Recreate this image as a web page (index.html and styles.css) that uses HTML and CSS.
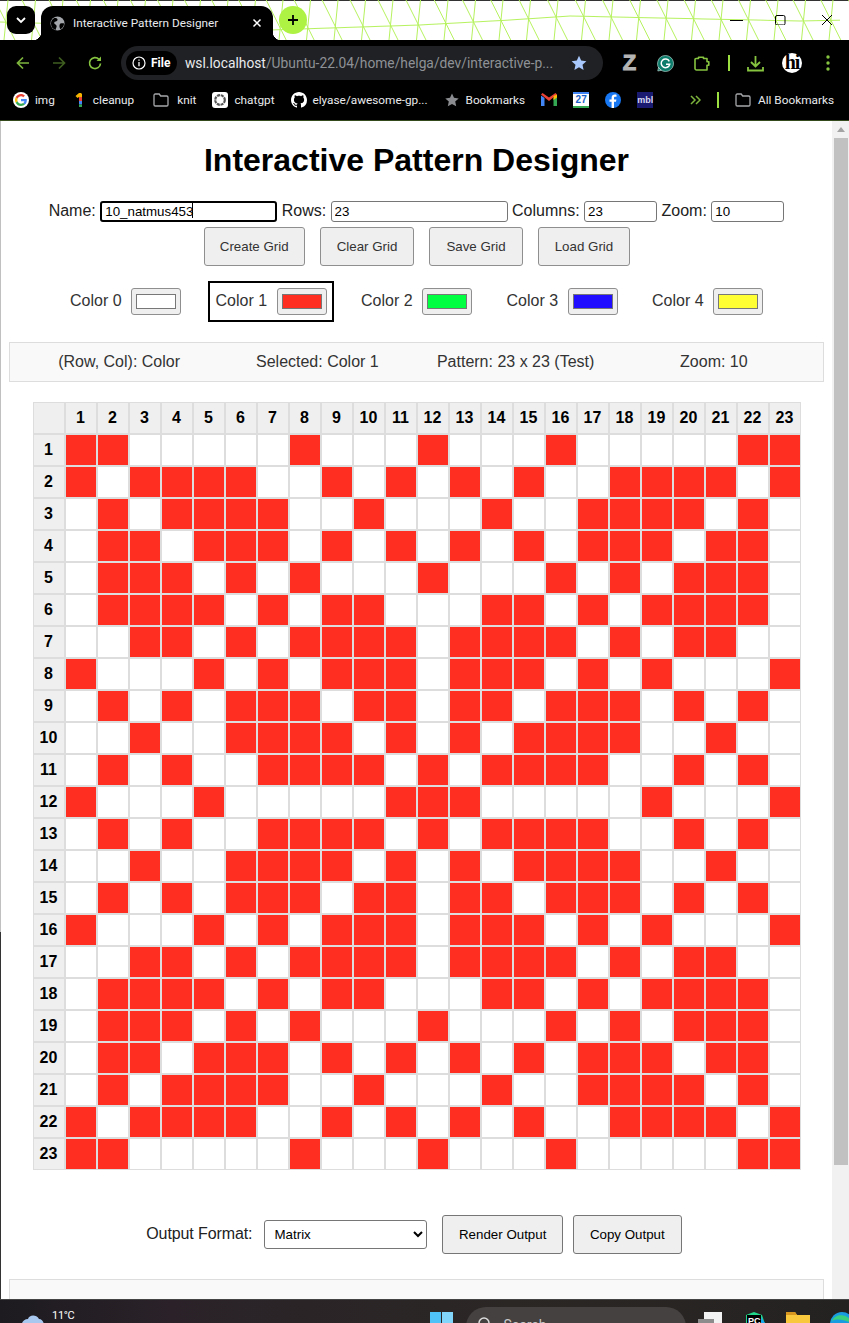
FILE: index.html
```html
<!DOCTYPE html>
<html lang="en">
<head>
  <meta charset="UTF-8">
  <title>Interactive Pattern Designer</title>
  <link rel="stylesheet" href="styles.css">
</head>
<body>

  <!-- browser tab strip -->
  <div class="tabstrip">
    <svg class="mesh" id="mesh" width="849" height="40"></svg>
    <button class="tab-search">
      <svg width="12" height="8" viewBox="0 0 12 8"><path d="M2 2l4 4 4-4" fill="none" stroke="#fff" stroke-width="1.8"/></svg>
    </button>
    <div class="tab">
      <svg width="15" height="15" viewBox="0 0 16 16"><circle cx="8" cy="8" r="7.5" fill="#a3a6ab"/><path d="M5 1.500c2 .5 3.500 1.500 3 3s-3 1-3.500 2.500 2 2 2.500 3.500-1 3-1 4.500c-3-1-5-3.500-5-7 0-3 1.500-5 4.500-6.500zM11 8c1.500-.5 3-.5 4 0 0 2.500-1.500 5-4 6-1-1.500-1.500-4.500 0-6z" fill="#000"/></svg>
      <span class="tab-title">Interactive Pattern Designer</span>
      <svg class="tab-close" width="10" height="10" viewBox="0 0 10 10"><path d="M1.500 1.500l7 7m0-7l-7 7" stroke="#fff" stroke-width="1.500"/></svg>
    </div>
    <button class="new-tab">
      <svg width="12" height="12" viewBox="0 0 12 12"><path d="M6 1v10M1 6h10" stroke="#000" stroke-width="1.800"/></svg>
    </button>
    <div class="window-btns">
      <svg width="13" height="12" viewBox="0 0 13 12"><path d="M0 7.500h13" stroke="#000" stroke-width="1"/></svg>
      <svg width="12" height="12" viewBox="0 0 12 12"><rect x="1.500" y="2.500" width="9.500" height="9.500" rx="1.500" fill="none" stroke="#000"/></svg>
      <svg class="win-close" width="12" height="12" viewBox="0 0 12 12"><path d="M1 2l10 10M11 2L1 12" stroke="#000"/></svg>
    </div>
  </div>

  <!-- address bar -->
  <div class="toolbar">
    <div class="nav-btns">
      <svg width="16" height="16" viewBox="0 0 16 16"><path d="M14 8H3M8 2.500L2.500 8 8 13.500" fill="none" stroke="#7db53c" stroke-width="1.700"/></svg>
      <svg width="16" height="16" viewBox="0 0 16 16"><path d="M2 8h11M8 2.500L13.500 8 8 13.500" fill="none" stroke="#3f5f20" stroke-width="1.700"/></svg>
      <svg width="16" height="16" viewBox="0 0 16 16"><path d="M13.500 8.500A5.500 5.500 0 1 1 12 4.300" fill="none" stroke="#86c440" stroke-width="1.700"/><path d="M14 1.500V6H9.500z" fill="#86c440"/></svg>
    </div>
    <div class="omnibox">
      <div class="file-chip">
        <svg width="14" height="14" viewBox="0 0 14 14"><circle cx="7" cy="7" r="6" fill="none" stroke="#fff" stroke-width="1.200"/><path d="M7 6v4.200M7 3.500v1.300" stroke="#fff" stroke-width="1.300"/></svg>
        <span>File</span>
      </div>
      <div class="url"><span class="url-host">wsl.localhost</span>/Ubuntu-22.04/home/helga/dev/interactive-p...</div>
      <svg class="url-star" width="16" height="16" viewBox="0 0 16 16"><path d="M8 .8l2.200 4.800 5.200.6-3.900 3.500 1.100 5.200L8 12.300l-4.600 2.600 1.100-5.200L.6 6.200l5.200-.6z" fill="#a8c7fa"/></svg>
    </div>
    <div class="ext-icons">
      <span class="ext-z">Z</span>
      <svg width="17" height="17" viewBox="0 0 17 17"><path d="M8.500.5a8 8 0 1 1-7 11.800L.8 16l3.600-.7A8 8 0 0 1 8.500.5z" fill="#0e7c6b" stroke="#cfe8e2" stroke-width=".6"/><path d="M12.300 6.300a4.300 4.300 0 1 0 .4 3H9" fill="none" stroke="#fff" stroke-width="1.500"/></svg>
      <svg width="17" height="17" viewBox="0 0 17 17"><path d="M3 3.500h2.500V2.200h5v1.300H14v3.300h1.800v3.400H14V15H3.500C2.700 15 2 14.300 2 13.500V4.500C2 4 2.500 3.500 3 3.500z" fill="none" stroke="#86c440" stroke-width="1.600" stroke-linejoin="round"/></svg>
      <span class="divider"></span>
      <svg class="ext-download" width="17" height="17" viewBox="0 0 17 17"><path d="M8.500 1v10M4 7l4.500 4.500L13 7" fill="none" stroke="#86c440" stroke-width="1.800"/><path d="M1 12v3.500h15V12" fill="none" stroke="#86c440" stroke-width="1.800"/></svg>
      <span class="avatar">hi</span>
      <svg class="ext-menu" width="4" height="16" viewBox="0 0 4 16"><circle cx="2" cy="2" r="1.700" fill="#86c440"/><circle cx="2" cy="8" r="1.700" fill="#86c440"/><circle cx="2" cy="14" r="1.700" fill="#86c440"/></svg>
    </div>
  </div>

  <!-- bookmarks bar -->
  <div class="bookmarks">
    <a class="bm">
      <svg width="16" height="16" viewBox="0 0 48 48"><circle cx="24" cy="24" r="24" fill="#fff"/><path fill="#ea4335" d="M24 13c3 0 5.200 1.100 6.800 2.600l5-4.900C32.700 7.800 28.700 6 24 6 17 6 11 10 8 15.900l5.800 4.500C15.300 16 19.300 13 24 13z"/><path fill="#4285f4" d="M41.500 24.400c0-1.400-.1-2.500-.4-3.600H24v6.700h10c-.2 1.700-1.300 4.200-3.800 5.900l5.700 4.400c3.500-3.200 5.600-7.900 5.600-13.400z"/><path fill="#fbbc05" d="M13.800 27.600c-.5-1.300-.7-2.300-.7-3.600s.3-2.500.7-3.600L8 15.900C6.700 18.400 6 21.100 6 24s.7 5.600 2 8.100z"/><path fill="#34a853" d="M24 42c4.900 0 9-1.600 11.900-4.400l-5.700-4.400c-1.500 1.100-3.500 1.800-6.200 1.800-4.700 0-8.700-3-10.200-7.400L8 32.100C11 38 17 42 24 42z"/></svg>
      img
    </a>
    <a class="bm">
      <svg width="16" height="16" viewBox="0 0 16 16"><path d="M10 1H8L4.500 4l2 2L8 5v4h3V2z" fill="#f4b400"/><path d="M8 5h3v4H8z" fill="#ea4335"/><path d="M8 9h3v3.500H8z" fill="#4285f4"/><path d="M8 12.500h3V15H8z" fill="#34a853"/></svg>
      cleanup
    </a>
    <a class="bm">
      <svg class="folder" width="16" height="14" viewBox="0 0 16 14"><path d="M1 2.500C1 1.700 1.500 1 2.300 1h3.900l1.500 2h6c.8 0 1.300.6 1.300 1.300v7.400c0 .7-.5 1.300-1.300 1.300H2.300C1.500 13 1 12.400 1 11.700z" fill="none" stroke="#a6a8ab" stroke-width="1.300"/></svg>
      knit
    </a>
    <a class="bm">
      <svg width="16" height="16" viewBox="0 0 16 16"><rect width="16" height="16" rx="3" fill="#fff"/><circle cx="8" cy="8" r="4.800" fill="none" stroke="#555" stroke-width="2.200" stroke-dasharray="3 .8"/></svg>
      chatgpt
    </a>
    <a class="bm">
      <svg width="16" height="16" viewBox="0 0 16 16"><path fill="#fff" d="M8 0C3.580 0 0 3.580 0 8c0 3.540 2.290 6.530 5.470 7.590.4.070.55-.17.55-.38 0-.19-.01-.82-.01-1.490-2.010.37-2.530-.49-2.690-.94-.09-.23-.48-.94-.82-1.130-.28-.15-.68-.52-.01-.53.63-.01 1.080.58 1.230.82.72 1.210 1.870.87 2.330.66.07-.52.28-.87.51-1.070-1.780-.2-3.640-.89-3.640-3.950 0-.87.31-1.590.82-2.150-.08-.2-.36-1.020.08-2.120 0 0 .67-.21 2.200.82.64-.18 1.320-.27 2-.27.68 0 1.360.09 2 .27 1.530-1.040 2.200-.82 2.200-.82.44 1.100.16 1.920.08 2.120.51.56.82 1.270.82 2.150 0 3.070-1.870 3.750-3.650 3.950.29.25.54.73.54 1.480 0 1.070-.01 1.930-.01 2.200 0 .21.15.46.55.38A8.013 8.013 0 0016 8c0-4.420-3.580-8-8-8z"/></svg>
      elyase/awesome-gp...
    </a>
    <a class="bm">
      <svg width="16" height="16" viewBox="0 0 16 16"><path d="M8 1.500l2 4.300 4.700.6-3.500 3.200 1 4.700L8 12l-4.200 2.300 1-4.700L1.300 6.400 6 5.800z" fill="#8a8c8f"/></svg>
      Bookmarks
    </a>
    <a class="bm">
      <svg width="16" height="13" viewBox="0 0 16 13"><path d="M0 2.500V13h3.500V5z" fill="#4285f4"/><path d="M16 2.500V13h-3.500V5z" fill="#34a853"/><path d="M0 1.500L8 8l8-6.500-1.500-1.500L8 4.500 1.500 0z" fill="#ea4335"/><path d="M16 1.500v3l-3.500 2.500V3z" fill="#fbbc05"/></svg>
    </a>
    <a class="bm">
      <span class="cal"><span class="cal-day">27</span></span>
    </a>
    <a class="bm">
      <svg width="16" height="16" viewBox="0 0 16 16"><circle cx="8" cy="8" r="8" fill="#1877f2"/><path d="M9 16V9.800h2l.4-2.400H9V6c0-.7.3-1.200 1.300-1.200h1.200V2.700C11 2.600 10.400 2.500 9.800 2.500 8 2.500 6.600 3.600 6.600 5.700v1.700H4.500v2.400h2.100V16z" fill="#fff"/></svg>
    </a>
    <a class="bm">
      <span class="mbl">mbl</span>
    </a>
    <div class="bm-right">
      <svg width="11" height="10" viewBox="0 0 11 10"><path d="M1 1l4 4-4 4M6 1l4 4-4 4" fill="none" stroke="#7db53c" stroke-width="1.500"/></svg>
      <span class="divider"></span>
      <a class="bm">
        <svg class="folder" width="16" height="14" viewBox="0 0 16 14"><path d="M1 2.500C1 1.700 1.500 1 2.300 1h3.900l1.500 2h6c.8 0 1.300.6 1.300 1.300v7.400c0 .7-.5 1.300-1.300 1.300H2.300C1.500 13 1 12.400 1 11.700z" fill="none" stroke="#a6a8ab" stroke-width="1.300"/></svg>
        All Bookmarks
      </a>
    </div>
  </div>

  <!-- the page itself -->
  <div class="viewport">
    <div class="window-edge"></div>
    <div class="page">
      <h1>Interactive Pattern Designer</h1>

      <div class="controls">
        <label>Name: <span class="name-wrap"><input type="text" class="name-input" value="10_natmus453"><span class="caret"></span></span></label>
        <label>Rows: <input type="text" class="rows-input" value="23"></label>
        <label>Columns: <input type="text" class="small-input" value="23"></label>
        <label>Zoom: <input type="text" class="small-input" value="10"></label>
      </div>

      <div class="actions">
        <button class="action-btn">Create Grid</button>
        <button class="action-btn">Clear Grid</button>
        <button class="action-btn">Save Grid</button>
        <button class="action-btn">Load Grid</button>
      </div>

      <div class="palette">
        <div class="color-item"><span>Color 0</span><input type="color" class="color-swatch" value="#ffffff"></div>
        <div class="color-item selected"><span>Color 1</span><input type="color" class="color-swatch" value="#ff2e20"></div>
        <div class="color-item"><span>Color 2</span><input type="color" class="color-swatch" value="#00ff41"></div>
        <div class="color-item"><span>Color 3</span><input type="color" class="color-swatch" value="#200cff"></div>
        <div class="color-item"><span>Color 4</span><input type="color" class="color-swatch" value="#ffff33"></div>
      </div>

      <div class="info-bar">
        <span>(Row, Col): Color</span>
        <span>Selected: Color 1</span>
        <span>Pattern: 23 x 23 (Test)</span>
        <span>Zoom: 10</span>
      </div>

      <table class="grid" id="grid"></table>

      <div class="output-controls">
        <label for="format" class="format-label">Output Format:</label>
        <select id="format" class="format-select">
          <option>Matrix</option>
        </select>
        <button class="output-btn">Render Output</button>
        <button class="output-btn">Copy Output</button>
      </div>

      <div class="output-box"></div>
    </div>
    <div class="scrollbar">
      <span class="scroll-up"></span>
      <span class="scroll-thumb"></span>
    </div>
  </div>

  <!-- windows taskbar, cut off by the bottom of the picture -->
  <div class="taskbar">
    <div class="weather">
      <svg width="26" height="20" viewBox="0 0 26 20"><path d="M4 20c-3-4 0-9 5-9 1-4 8-5 11 0 4 0 6 5 4 9z" fill="#a9c8f0"/></svg>
      <span>11°C</span>
    </div>
    <div class="task-center">
      <svg class="win-logo" width="23" height="23" viewBox="0 0 23 23"><rect width="11" height="11" fill="#4fc3f7"/><rect x="12" width="11" height="11" fill="#81d4fa"/><rect y="12" width="11" height="11" fill="#29a8e8"/><rect x="12" y="12" width="11" height="11" fill="#4fc3f7"/></svg>
      <div class="search-pill">
        <svg width="14" height="14" viewBox="0 0 14 14"><circle cx="6" cy="6" r="5" fill="none" stroke="#ddd" stroke-width="1.500"/></svg>
        <span>Search</span>
      </div>
      <div class="task-icons">
        <svg width="24" height="20" viewBox="0 0 24 20"><rect x="6" width="18" height="20" fill="#f2f2f2"/><rect y="7" width="16" height="13" fill="#8c8c8c"/></svg>
        <svg width="22" height="20" viewBox="0 0 22 20"><path d="M3 3l8-3 8 3 3 9-3 8H3z" fill="#21d789"/><path d="M18 5l4 6-4 6z" fill="#19a8f0"/><rect x="4" y="3" width="14" height="14" fill="#000"/><text x="5" y="12" font-size="9" font-weight="700" font-family="Liberation Sans, sans-serif" fill="#fff">PC</text></svg>
        <svg width="24" height="20" viewBox="0 0 24 20"><path d="M0 0h9l2 3h13v17H0z" fill="#f9c83d"/><path d="M0 0h9l2 3H0z" fill="#d6961f"/></svg>
        <svg class="edge" width="24" height="20" viewBox="0 0 24 20"><circle cx="12" cy="12" r="12" fill="#1a9de0"/><path d="M2 9c3-8 18-8 20 3-5-4-15-6-20-3z" fill="#39d07f"/></svg>
      </div>
    </div>
  </div>

  <script src="script.js"></script>
</body>
</html>
```

FILE: styles.css
```css
* {
  box-sizing: border-box;
}
html, body {
  margin: 0;
  height: 100%;
  overflow: hidden;
}
body {
  display: flex;
  flex-direction: column;
  font-family: "Liberation Sans", Arial, sans-serif;
  background: #000;
}
svg {
  display: block;
  flex: none;
}

/* tab strip */
.tabstrip {
  position: relative;
  display: flex;
  align-items: flex-start;
  height: 40px;
  background: #fff;
  border-top: 1px solid #333;
  flex: none;
}
.mesh {
  position: absolute;
  left: 0;
  top: -1px;
}
.tab-search {
  position: relative;
  display: flex;
  align-items: center;
  justify-content: center;
  width: 28px;
  height: 28px;
  margin: 5px 0 0 7px;
  padding: 0;
  background: #000;
  border: none;
  border-radius: 9px;
}
.tab {
  position: relative;
  display: flex;
  align-items: center;
  gap: 8px;
  width: 232px;
  height: 34px;
  margin: 5px 0 0 6px;
  padding: 0 11px 0 9px;
  background: #000;
  border-radius: 12px 12px 0 0;
}
.tab::before,
.tab::after {
  content: "";
  position: absolute;
  bottom: 0;
  width: 8px;
  height: 8px;
}
.tab::before {
  left: -8px;
  background: radial-gradient(circle at 0 0, transparent 8px, #000 8.500px);
}
.tab::after {
  right: -8px;
  background: radial-gradient(circle at 100% 0, transparent 8px, #000 8.500px);
}
.tab-title {
  flex: 1;
  color: #e8eaed;
  font: 11.800px Roboto, sans-serif;
  white-space: nowrap;
}
.new-tab {
  position: relative;
  display: flex;
  align-items: center;
  justify-content: center;
  width: 28px;
  height: 28px;
  margin: 5px 0 0 6px;
  padding: 0;
  background: #aef243;
  border: none;
  border-radius: 50%;
}
.window-btns {
  position: relative;
  display: flex;
  gap: 31px;
  margin: 12px 16px 0 auto;
}
.win-close {
  margin-left: 4px;
}

/* toolbar */
.toolbar {
  display: flex;
  align-items: center;
  height: 41px;
  padding-top: 5px;
  background: #000;
  flex: none;
}
.nav-btns {
  display: flex;
  gap: 20px;
  padding-left: 15px;
}
.omnibox {
  display: flex;
  align-items: center;
  width: 482px;
  height: 34px;
  margin-left: 18px;
  padding: 0 16px 0 5px;
  background: #202124;
  border-radius: 17px;
}
.file-chip {
  display: flex;
  align-items: center;
  gap: 5px;
  width: 51px;
  height: 24px;
  padding-left: 6px;
  background: #000;
  border-radius: 12px;
  color: #fff;
  font: 700 12px Roboto, sans-serif;
}
.url {
  flex: 1;
  margin-left: 8px;
  color: #8e9196;
  font: 13.800px Roboto, sans-serif;
  white-space: nowrap;
}
.url-host {
  color: #e8eaed;
}
.ext-icons {
  display: flex;
  align-items: center;
  gap: 19px;
  padding-left: 18px;
}
.ext-z {
  width: 17px;
  color: #b4b4b4;
  font: 700 22px/22px "Liberation Sans", sans-serif;
  text-align: center;
  -webkit-text-stroke: 1px #b4b4b4;
}
.divider {
  width: 2px;
  height: 16px;
  margin: 0 -1px;
  background: #9be040;
}
.ext-download {
  margin-left: -1px;
}
.avatar {
  width: 20px;
  height: 20px;
  margin-left: -1px;
  background: #fff;
  border-radius: 50%;
  color: #000;
  font: 700 20px/18px "Liberation Serif", serif;
  letter-spacing: -1px;
  text-align: center;
}
.ext-menu {
  margin-left: 5px;
}

/* bookmarks */
.bookmarks {
  display: flex;
  align-items: center;
  gap: 16px;
  height: 40px;
  padding: 0 15px 2px 13px;
  background: #000;
  border-bottom: 1px solid #34491c;
  flex: none;
}
.bm {
  display: flex;
  align-items: center;
  gap: 6px;
  color: #e8eaed;
  font: 11.800px Roboto, sans-serif;
  white-space: nowrap;
}
.folder {
  margin: 0 2px 0 3px;
}
.cal {
  display: block;
  width: 16px;
  height: 16px;
  background: #fff;
  border-top: 2px solid #4285f4;
  border-bottom: 2px solid #34a853;
  text-align: center;
}
.cal-day {
  display: block;
  color: #1a5fc8;
  font: 700 10px/12px "Liberation Sans", sans-serif;
}
.mbl {
  display: block;
  width: 16px;
  height: 16px;
  background: #1a1a70;
  color: #d8d8f0;
  font: 700 9px/16px "Liberation Sans", sans-serif;
  text-align: center;
}
.bm-right {
  display: flex;
  align-items: center;
  gap: 17px;
  margin-left: auto;
}
.bm-right .folder {
  margin: 0 1px 0 0;
}

/* page */
.viewport {
  display: flex;
  flex: 1;
  min-height: 0;
  background: #fff;
  overflow: hidden;
}
.window-edge {
  width: 1px;
  background: linear-gradient(#c0c0c0 811px, #333 811px);
  flex: none;
}
.page {
  width: 831px;
  padding: 0 8px;
  color: #000;
  font-size: 16px;
  flex: none;
}
h1 {
  margin: 21px 0 21px;
  font-size: 32px;
  line-height: 37px;
  text-align: center;
}
.controls {
  line-height: 22px;
  text-align: center;
  color: #222;
}
.controls input {
  height: 21px;
  padding: 1px 3px;
  border: 1px solid #767676;
  border-radius: 3px;
  font: 13.330px "Liberation Sans", sans-serif;
  vertical-align: baseline;
}
.name-wrap {
  position: relative;
  display: inline-block;
}
.controls .name-input {
  width: 177px;
  padding: 0 3px;
  border: 2px solid #000;
}
.caret {
  position: absolute;
  left: 92px;
  top: 3px;
  width: 1px;
  height: 15px;
  background: #000;
}
.rows-input {
  width: 177px;
}
.small-input {
  width: 73px;
}
.actions {
  display: flex;
  justify-content: center;
  gap: 15px;
  margin-top: 5px;
  padding-left: 1px;
}
.action-btn {
  height: 39px;
  padding: 0 16px;
  background: #efefef;
  border: 1px solid #8f8f8f;
  border-radius: 3px;
  color: #333;
  font: 13.330px "Liberation Sans", sans-serif;
}
.action-btn:first-child {
  padding: 0 15px;
}
.palette {
  display: flex;
  justify-content: center;
  gap: 19.500px;
  margin-top: 15px;
  padding-right: 1px;
}
.color-item {
  display: flex;
  align-items: center;
  justify-content: space-between;
  width: 126px;
  height: 41px;
  padding: 5px 5px 5px 6px;
  border: 2px solid transparent;
  color: #333;
}
.color-item span {
  margin-bottom: 2px;
}
.color-item.selected {
  border-color: #000;
}
.color-swatch {
  width: 50px;
  height: 27px;
  padding: 1px 2px;
  background: #efefef;
  border: 1px solid #8f8f8f;
  border-radius: 3px;
}
.info-bar {
  display: grid;
  grid-template-columns: repeat(4, 1fr);
  align-items: center;
  height: 40px;
  margin-top: 20px;
  padding: 0 10px;
  background: #f9f9f9;
  border: 1px solid #ddd;
  color: #333;
  text-align: center;
}

/* pattern grid */
.grid {
  margin: 20px auto 0;
  border: 1px solid #ddd;
  border-collapse: separate;
  border-spacing: 0;
}
.grid th,
.grid td {
  box-sizing: content-box;
  width: 30px;
  height: 30px;
  padding: 0;
  border-right: 2px solid #ddd;
  border-bottom: 2px solid #ddd;
  text-align: center;
}
.grid tr > :last-child {
  border-right: none;
}
.grid tr:last-child > * {
  border-bottom: none;
}
.grid th {
  background: #efefef;
  font-size: 16px;
}
.grid td {
  background: #fff;
}
.grid td.on {
  background: #ff2e20;
}

/* output */
.output-controls {
  display: flex;
  align-items: center;
  justify-content: center;
  margin-top: 45px;
  padding-right: 5px;
  color: #222;
}
.format-label {
  margin-bottom: 2px;
  letter-spacing: -.1px;
}
.format-select {
  width: 163px;
  height: 29px;
  margin: 0 15px 0 12px;
  padding: 0 5px;
  background: #fff;
  border: 1px solid #767676;
  border-radius: 3px;
  color: #000;
  font: 13.330px "Liberation Sans", sans-serif;
}
.output-btn {
  height: 39px;
  margin-right: 10px;
  padding: 0 15.500px;
  background: #efefef;
  border: 1px solid #767676;
  border-radius: 3px;
  color: #000;
  font: 13.330px "Liberation Sans", sans-serif;
}
.output-btn:last-child {
  margin-right: 0;
  padding: 0 16px;
}
.output-box {
  height: 60px;
  margin-top: 25px;
  background: #f9f9f9;
  border: 1px solid #ddd;
}

/* scrollbar */
.scrollbar {
  display: flex;
  flex-direction: column;
  align-items: center;
  width: 17px;
  background: #f1f1f1;
  flex: none;
}
.scroll-up {
  width: 0;
  height: 0;
  margin-top: 6px;
  border: 4px solid transparent;
  border-top: none;
  border-bottom: 5px solid #a3a3a3;
}
.scroll-thumb {
  width: 14px;
  height: 1027px;
  margin-top: 6px;
  background: #c1c1c1;
}

/* taskbar */
.taskbar {
  display: flex;
  height: 24px;
  overflow: hidden;
  background: linear-gradient(90deg, #1d1b20, #2a2228 20%, #2b2725 60%, #242221);
  border-top: 1px solid #444;
  flex: none;
}
.weather {
  display: flex;
  gap: 7px;
  padding-left: 19px;
  color: #fff;
  font: 11px Roboto, sans-serif;
  letter-spacing: -.3px;
}
.weather svg {
  margin-top: 8px;
}
.weather span {
  margin-top: 9px;
}
.task-center {
  display: flex;
  margin-left: 356px;
}
.win-logo {
  margin-top: 12px;
}
.search-pill {
  display: flex;
  gap: 11px;
  width: 220px;
  height: 40px;
  margin: 7px 0 0 13px;
  padding: 10px 0 0 12px;
  background: #454140;
  border-radius: 20px;
  color: #c8c8c8;
  font: 14px Roboto, sans-serif;
}
.task-icons {
  display: flex;
  gap: 21px;
  margin-left: 12px;
  padding-top: 12px;
}
.task-icons .edge {
  margin-left: -1px;
}
```

FILE: script.js
```js
// which cells are coloured, per row. rows 13-23 mirror rows 11-1
const topRows = [
  [1, 2, 8, 12, 16, 22, 23],
  [1, 3, 4, 5, 6, 9, 11, 13, 15, 18, 19, 20, 21, 23],
  [2, 4, 5, 6, 7, 10, 14, 17, 18, 19, 20, 22],
  [2, 3, 5, 6, 7, 9, 11, 13, 15, 17, 18, 19, 21, 22],
  [2, 3, 4, 6, 8, 12, 16, 18, 20, 21, 22],
  [2, 3, 4, 5, 7, 9, 10, 14, 15, 17, 19, 20, 21, 22],
  [3, 4, 6, 8, 9, 10, 11, 13, 14, 15, 16, 18, 20, 21],
  [1, 5, 7, 9, 10, 11, 13, 14, 15, 17, 19, 23],
  [2, 4, 6, 7, 8, 10, 11, 13, 14, 16, 17, 18, 20, 22],
  [3, 6, 7, 8, 9, 11, 13, 15, 16, 17, 18, 21],
  [2, 4, 7, 8, 9, 10, 12, 14, 15, 16, 17, 20, 22],
  [1, 5, 11, 12, 13, 19, 23]
];
const pattern = topRows.concat(topRows.slice(0, 11).reverse());

function buildGrid() {
  let html = "<tr><th></th>";
  for (let c = 1; c <= 23; c++) html += `<th>${c}</th>`;
  html += "</tr>";
  pattern.forEach((row, r) => {
    html += `<tr><th>${r + 1}</th>`;
    for (let c = 1; c <= 23; c++) {
      html += row.includes(c) ? '<td class="on"></td>' : "<td></td>";
    }
    html += "</tr>";
  });
  document.getElementById("grid").innerHTML = html;
}

// the lime theme mesh behind the tabs
function waveY(x) {
  const pts = [[0, 22], [270, 30], [420, 25], [510, 20], [570, 16], [660, 18], [800, 21], [849, 20]];
  for (let i = 1; i < pts.length; i++) {
    if (x <= pts[i][0]) {
      const [x0, y0] = pts[i - 1];
      const [x1, y1] = pts[i];
      return y0 + (y1 - y0) * (x - x0) / (x1 - x0);
    }
  }
  return 20;
}

function buildMesh() {
  let d = "M0 22";
  for (let x = 10; x <= 849; x += 10) d += `L${x} ${waveY(x).toFixed(1)}`;
  for (let x = 6; x < 870; x += 27.5) {
    const y = waveY(x);
    d += `M${x - y / 2} 0L${x + (40 - y) / 2} 40`;
    d += `M${x + 2} 0L${x - 2} 40`;
  }
  document.getElementById("mesh").innerHTML =
    `<path d="${d}" fill="none" stroke="#b6f25e" stroke-width="1"/>`;
}

buildGrid();
buildMesh();
```
